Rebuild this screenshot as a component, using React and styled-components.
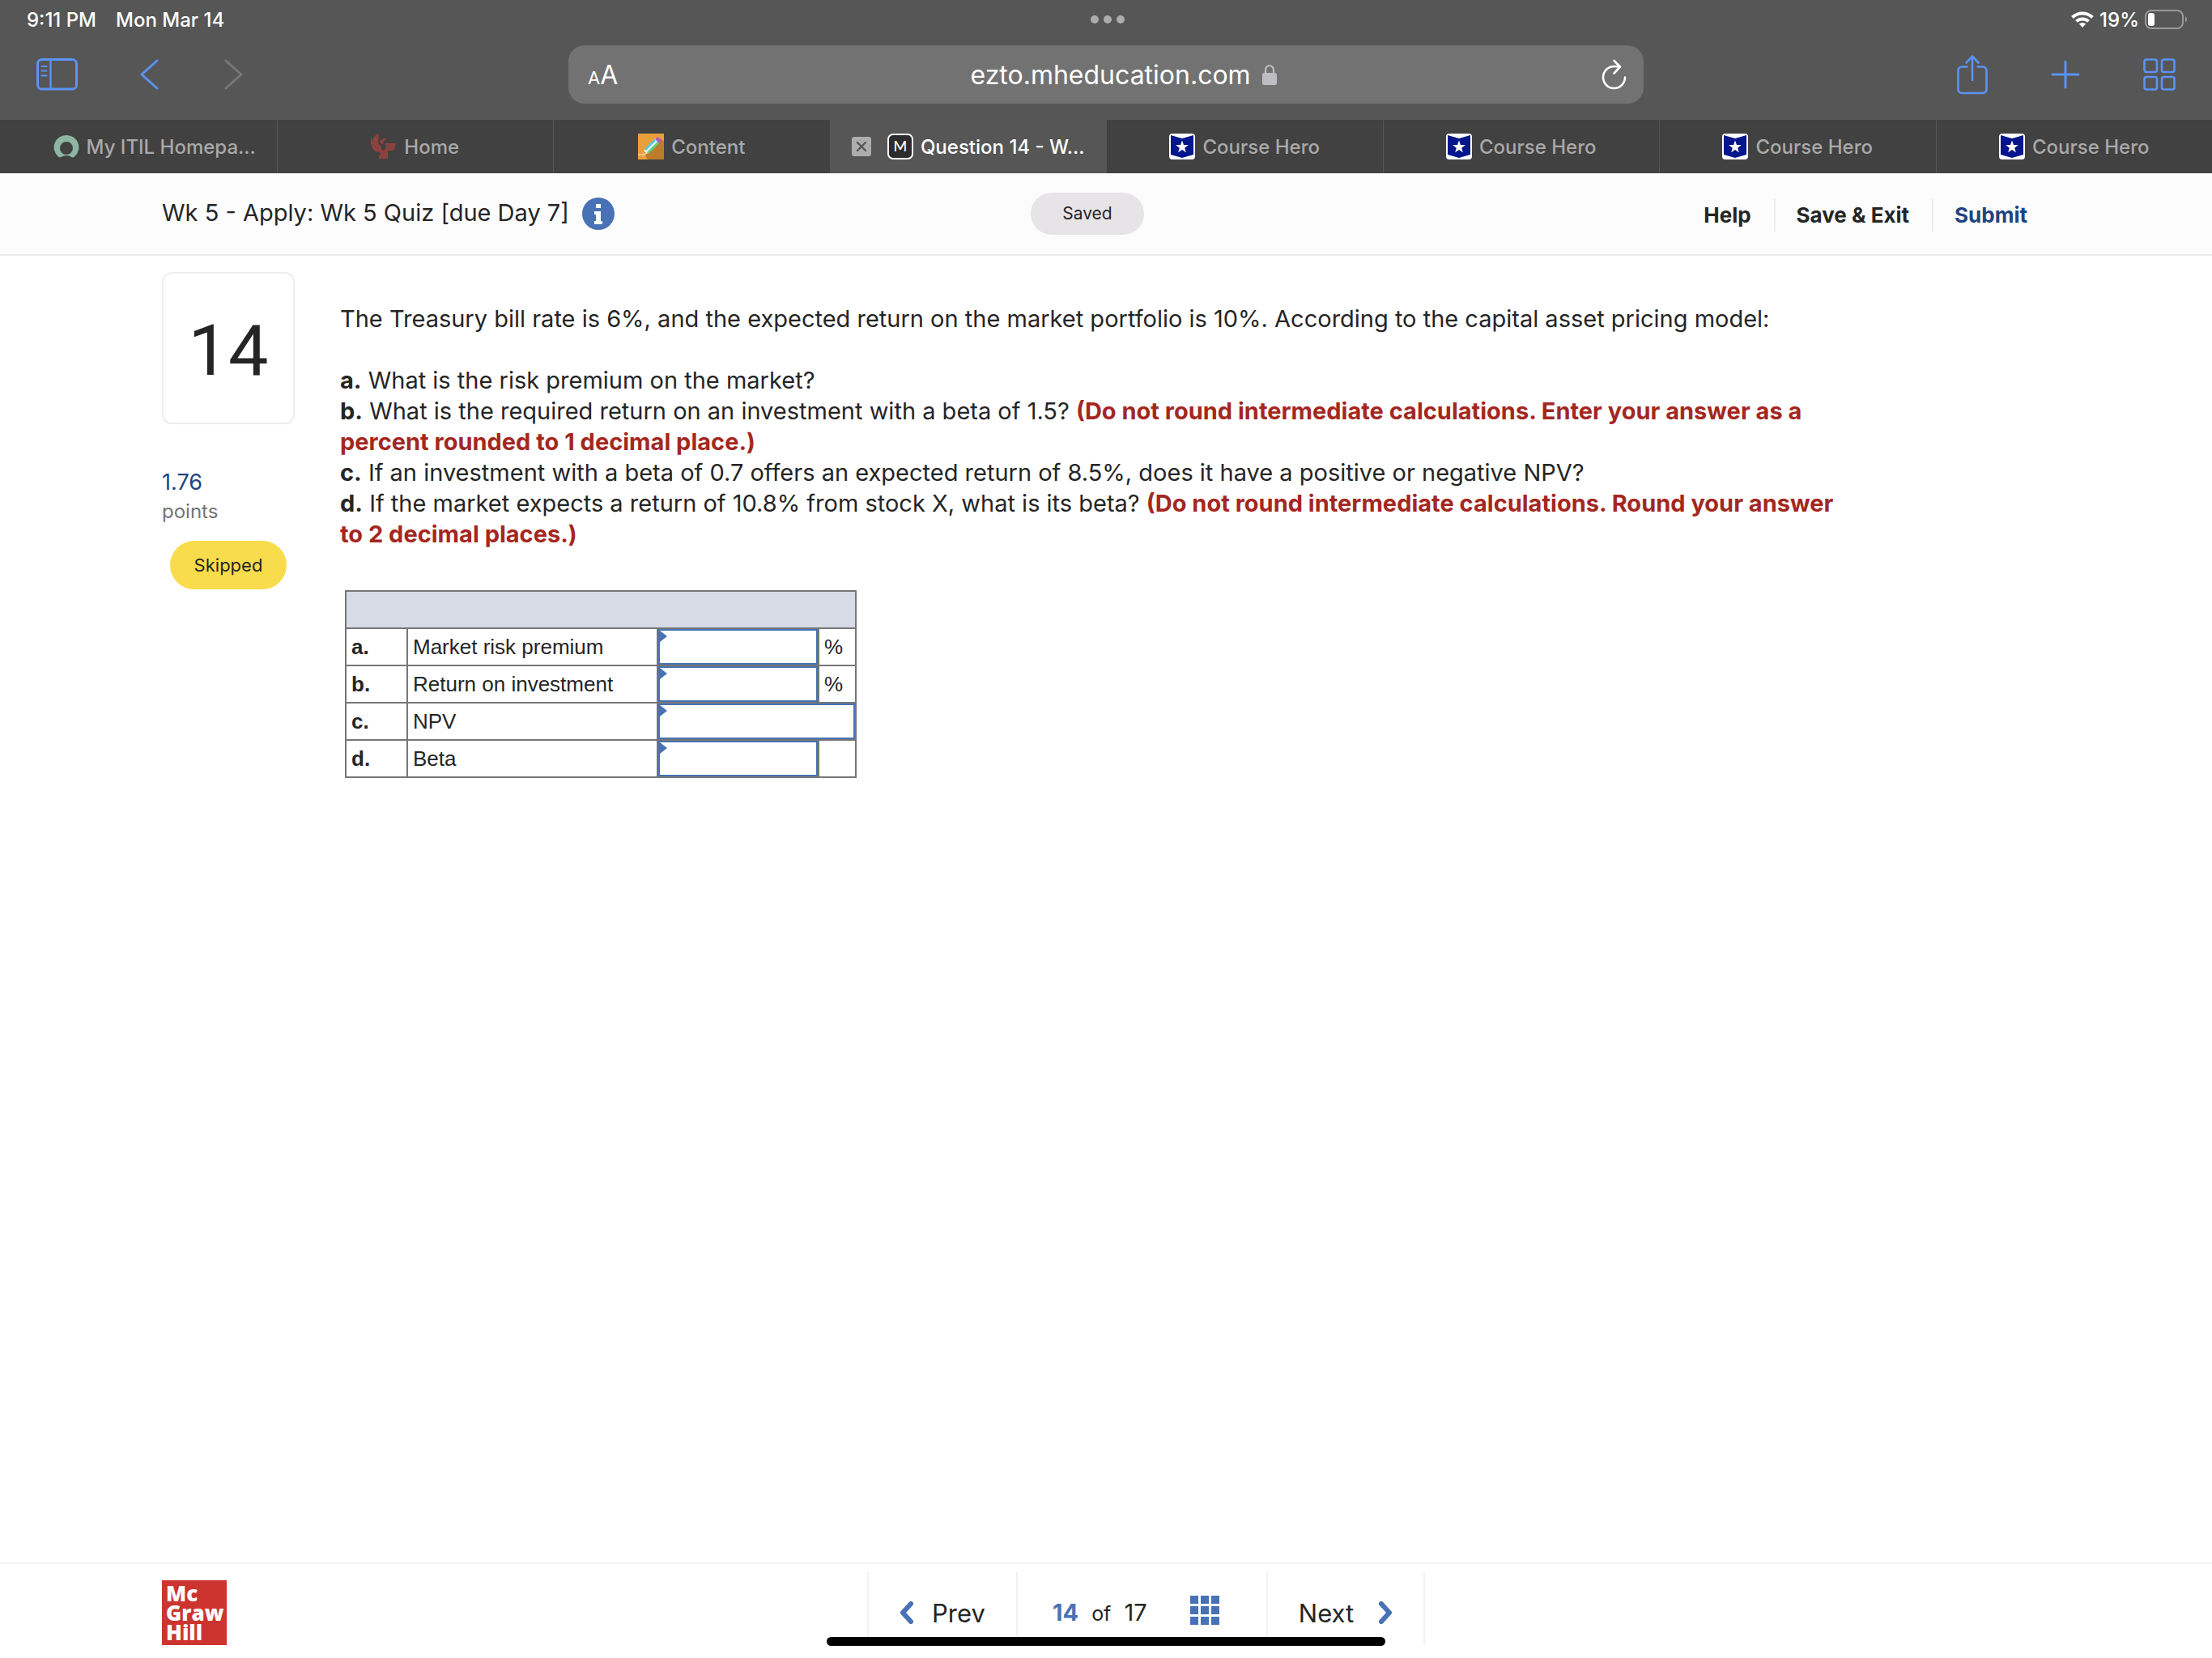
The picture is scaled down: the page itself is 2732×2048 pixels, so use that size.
import { Fragment } from 'react';
import styled, { createGlobalStyle } from 'styled-components';

const tabs = [
  { title: 'My ITIL Homepa...', icon: 'ring', long: true },
  { title: 'Home', icon: 'phoenix' },
  { title: 'Content', icon: 'pencil' },
  { title: 'Question 14 - W...', icon: 'm', active: true },
  { title: 'Course Hero', icon: 'hero' },
  { title: 'Course Hero', icon: 'hero' },
  { title: 'Course Hero', icon: 'hero' },
  { title: 'Course Hero', icon: 'hero' },
];

const answers = [
  { id: 'a', label: 'Market risk premium', unit: '%' },
  { id: 'b', label: 'Return on investment', unit: '%' },
  { id: 'c', label: 'NPV', wide: true },
  { id: 'd', label: 'Beta', unit: '' },
];

export default function App() {
  return (
    <Page>
      <GlobalStyle />
      <Browser>
        <StatusBar>
          <StatusGroup $gap={24}>
            <span>9:11 PM</span>
            <span>Mon Mar 14</span>
          </StatusGroup>
          <Dots><i /><i /><i /></Dots>
          <StatusGroup $gap={7} $end>
            <WifiIcon />
            <span>19%</span>
            <BatteryIcon />
          </StatusGroup>
        </StatusBar>
        <Toolbar>
          <ToolGroup>
            <IconButton aria-label="Sidebar"><SidebarIcon /></IconButton>
            <IconButton aria-label="Back"><Chevron points="21,2 2,19 21,36" /></IconButton>
            <IconButton aria-label="Forward" $dim><Chevron points="4,2 23,19 4,36" /></IconButton>
          </ToolGroup>
          <AddressBar>
            <TextSizeButton aria-label="Text size"><small>A</small>A</TextSizeButton>
            <AddressCenter>
              <AddressInput aria-label="Address" defaultValue="ezto.mheducation.com" />
              <LockIcon />
            </AddressCenter>
            <IconButton aria-label="Reload" $light><ReloadIcon /></IconButton>
          </AddressBar>
          <ToolGroup $end>
            <IconButton aria-label="Share"><ShareIcon /></IconButton>
            <IconButton aria-label="New tab"><PlusIcon /></IconButton>
            <IconButton aria-label="All tabs"><TabsIcon /></IconButton>
          </ToolGroup>
        </Toolbar>
        <TabBar>
          {tabs.map((tab, i) => (
            <Tab key={i} $active={tab.active} $long={tab.long}>
              {tab.active && <CloseTab aria-label="Close tab"><CloseIcon /></CloseTab>}
              <TabButton>
                <Favicon name={tab.icon} />
                {tab.title}
              </TabButton>
            </Tab>
          ))}
        </TabBar>
      </Browser>

      <Header>
        <Title>
          <h1>Wk 5 - Apply: Wk 5 Quiz [due Day 7]</h1>
          <InfoButton aria-label="Information"><InfoIcon /></InfoButton>
        </Title>
        <Saved>Saved</Saved>
        <Actions>
          <ActionButton>Help</ActionButton>
          <ActionButton>Save &amp; Exit</ActionButton>
          <ActionButton $primary>Submit</ActionButton>
        </Actions>
      </Header>

      <Main>
        <Aside>
          <NumberCard>14</NumberCard>
          <Points>1.76</Points>
          <PointsLabel>points</PointsLabel>
          <Skipped>Skipped</Skipped>
        </Aside>
        <Question>
          <p>
            The Treasury bill rate is 6%, and the expected return on the market portfolio is 10%. According to the
            capital asset pricing model:
          </p>
          <p>
            <b>a.</b> What is the risk premium on the market?
            <br />
            <b>b.</b> What is the required return on an investment with a beta of 1.5?{' '}
            <Note>(Do not round intermediate calculations. Enter your answer as a percent rounded to 1 decimal place.)</Note>
            <br />
            <b>c.</b> If an investment with a beta of 0.7 offers an expected return of 8.5%, does it have a positive or
            negative NPV?
            <br />
            <b>d.</b> If the market expects a return of 10.8% from stock X, what is its beta?{' '}
            <Note>(Do not round intermediate calculations. Round your answer to 2 decimal places.)</Note>
          </p>
          <AnswerTable>
            <colgroup>
              <col width="76" />
              <col width="309" />
              <col width="199" />
              <col width="46" />
            </colgroup>
            <thead>
              <tr><td colSpan={4} /></tr>
            </thead>
            <tbody>
              {answers.map(row => (
                <tr key={row.id}>
                  <th scope="row">{row.id}.</th>
                  <td><label htmlFor={`answer-${row.id}`}>{row.label}</label></td>
                  <AnswerCell colSpan={row.wide ? 2 : 1}>
                    <AnswerInput id={`answer-${row.id}`} type="text" />
                  </AnswerCell>
                  {!row.wide && <td>{row.unit}</td>}
                </tr>
              ))}
            </tbody>
          </AnswerTable>
        </Question>
      </Main>

      <Footer>
        <Logo><span>Mc</span><span>Graw</span><span>Hill</span></Logo>
        <Pager>
          <PagerButton $width={182}>
            <PagerChevron points="14,3 4,14 14,25" />
            Prev
          </PagerButton>
          <PagerStatus>
            <PagerCount><b>14</b> <small>of</small> 17</PagerCount>
            <GridButton aria-label="Question list"><GridIcon /></GridButton>
          </PagerStatus>
          <PagerButton $width={192} $next>
            Next
            <PagerChevron points="4,3 14,14 4,25" />
          </PagerButton>
        </Pager>
      </Footer>
      <HomeIndicator />
    </Page>
  );
}

function WifiIcon() {
  return (
    <svg width="28" height="20" viewBox="0 0 28 20" fill="none" stroke="#fff" strokeWidth="4">
      <path d="M1.5 7.5a18 18 0 0 1 25 0" />
      <path d="M6.5 12.4a11 11 0 0 1 15 0" />
      <path d="M14 20l-4.2-4.4a6 6 0 0 1 8.4 0z" fill="#fff" stroke="none" />
    </svg>
  );
}

function BatteryIcon() {
  return (
    <svg width="54" height="24" viewBox="0 0 54 24">
      <rect x="1" y="1" width="46" height="22" rx="7" fill="none" stroke="#9a9a9a" strokeWidth="2" />
      <rect x="4" y="4" width="8" height="16" rx="3" fill="#fff" />
      <path d="M50 8a5 5 0 0 1 0 8z" fill="#9a9a9a" />
    </svg>
  );
}

function SidebarIcon() {
  return (
    <svg width="52" height="40" viewBox="0 0 52 40" fill="none" stroke="currentColor" strokeLinecap="round">
      <rect x="1.5" y="1.5" width="48" height="36.5" rx="5" strokeWidth="3" />
      <path d="M17.5 2v36" strokeWidth="2.4" />
      <path d="M6.5 10h6M6.5 15.500h6M6.500 21.500h6" strokeWidth="2" />
    </svg>
  );
}

function Chevron({ points }) {
  return (
    <svg width="26" height="38" viewBox="0 0 26 38" fill="none" stroke="currentColor" strokeWidth="3" strokeLinecap="round" strokeLinejoin="round">
      <polyline points={points} />
    </svg>
  );
}

function LockIcon() {
  return (
    <svg width="18" height="26" viewBox="0 0 18 26">
      <path d="M4 12V7.5a5 5.5 0 0 1 10 0V12" fill="none" stroke="#bebdc2" strokeWidth="2.2" />
      <rect x="0" y="11" width="18" height="15" rx="2.5" fill="#bebdc2" />
    </svg>
  );
}

function ReloadIcon() {
  return (
    <svg width="32" height="38" viewBox="0 0 32 38" fill="none" stroke="currentColor" strokeWidth="2.6" strokeLinecap="round" strokeLinejoin="round">
      <path d="M29 22.5A13.5 13.5 0 1 1 15.500 9q4 0 7 .5" />
      <path d="M15.5 2l7.5 7.5-7.5 8" />
    </svg>
  );
}

function ShareIcon() {
  return (
    <svg width="38" height="50" viewBox="0 0 38 50" fill="none" stroke="currentColor" strokeWidth="2.6" strokeLinecap="round" strokeLinejoin="round">
      <path d="M12.5 15.5H6a4.5 4.5 0 0 0-4.5 4.5v23.5A4.5 4.5 0 0 0 6 48h26a4.5 4.5 0 0 0 4.5-4.5V20a4.5 4.5 0 0 0-4.5-4.5h-6.5" />
      <path d="M19 32V3M11.5 10.5L19 2.5l7.500 8" />
    </svg>
  );
}

function PlusIcon() {
  return (
    <svg width="36" height="36" viewBox="0 0 36 36" fill="none" stroke="currentColor" strokeWidth="3" strokeLinecap="round">
      <path d="M18 2v32M2 18h32" />
    </svg>
  );
}

function TabsIcon() {
  return (
    <svg width="40" height="40" viewBox="0 0 40 40" fill="none" stroke="currentColor" strokeWidth="2.6">
      <rect x="1.5" y="1.5" width="15.5" height="15.5" rx="2.5" />
      <rect x="23" y="1.5" width="15.5" height="15.5" rx="2.5" />
      <rect x="1.5" y="23" width="15.5" height="15.5" rx="2.5" />
      <rect x="23" y="23" width="15.5" height="15.5" rx="2.5" />
    </svg>
  );
}

function CloseIcon() {
  return (
    <svg width="24" height="24" viewBox="0 0 24 24">
      <rect width="24" height="24" rx="3" fill="#adadad" />
      <path d="M7 7l10 10M17 7L7 17" stroke="#565656" strokeWidth="2.4" strokeLinecap="round" />
    </svg>
  );
}

function Favicon({ name }) {
  return (
    <svg width="32" height="32" viewBox="0 0 32 32" aria-hidden="true">
      {name === 'ring' && (
        <path
          fill="#8fb5a3"
          fillRule="evenodd"
          d="M16 2a15 15 0 0 1 10 26.5q-1.500 1.500-3.500.6-6.500-4-13 0-2 .9-3.500-.6A15 15 0 0 1 16 2zm0 8a8 8 0 1 0 0 16 8 8 0 0 0 0-16z"
        />
      )}
      {name === 'phoenix' && (
        <g fill="#94403c">
          <path d="M8 0l1.500 1v6l-1 4 4 5 1 5-2 2-6-1-4-5L0 12V5l2 3 3-5z" />
          <path d="M11 9l5-3h4l-2 2-2 1-1 4-3-1z" />
          <path d="M18 12h13l-1 4-1 4-3 1h-5l-3 3-2-3 3-3z" />
          <path d="M11 23l3-3 4 2 3-1v10H10v-3l2-2z" />
          <path d="M19 15h11M20 18h9M1 8l8 6M1 13l9 6M6 4l3 3M13 23l7 5M12 28l6-5" stroke="#6e4542" strokeWidth="1" />
        </g>
      )}
      {name === 'pencil' && (
        <>
          <rect width="32" height="32" fill="#e9a03b" />
          <path d="M28 6l4 4v22H12l-3-5z" fill="#bd7b2c" />
          <path d="M0 26h9" stroke="#f3d9a5" strokeWidth="1.5" />
          <path d="M6 26l2-6L22 6l5 4-14 14z" fill="#f4f4ee" />
          <path d="M9 20L21 8" stroke="#55c8ea" strokeWidth="2.8" />
          <path d="M12 24L25 11" stroke="#5fce80" strokeWidth="2.8" />
          <path d="M21 7l3-3 5 4-3 4z" fill="#a85cc5" />
          <path d="M6 26l1.5-4.5L10 24z" fill="#f09a37" />
        </>
      )}
      {name === 'm' && (
        <>
          <rect x="1" y="1" width="30" height="30" rx="6" fill="#2c2c2c" stroke="#fff" strokeWidth="2" />
          <text x="16" y="22" textAnchor="middle" fill="#fff" fontFamily="Lato, sans-serif" fontSize="18">M</text>
        </>
      )}
      {name === 'hero' && (
        <>
          <rect width="32" height="32" rx="4" fill="#fff" />
          <path d="M2 2l14 4 14-4v24l-14 4-14-4z" fill="#05168c" />
          <path d="M16 8.5l2 5.4 5.8.2-4.6 3.6 1.600 5.6-4.800-3.200-4.800 3.200 1.600-5.600-4.600-3.600 5.800-.2z" fill="#fff" />
        </>
      )}
    </svg>
  );
}

function InfoIcon() {
  return (
    <svg width="40" height="40" viewBox="0 0 40 40">
      <circle cx="20" cy="20" r="20" fill="#4872b5" />
      <path d="M17 8h6v5h-6zM15 17h8v12h2v4H15v-4h2v-8h-2z" fill="#fff" />
    </svg>
  );
}

function PagerChevron({ points }) {
  return (
    <svg width="18" height="28" viewBox="0 0 18 28" fill="none" stroke="#4872b5" strokeWidth="6" strokeLinecap="round" strokeLinejoin="round">
      <polyline points={points} />
    </svg>
  );
}

function GridIcon() {
  return (
    <svg width="36" height="36" viewBox="0 0 36 36" fill="#4872b5">
      {[0, 13, 26].map(y => (
        <Fragment key={y}>
          {[0, 13, 26].map(x => <rect key={x} x={x} y={y} width="10" height="10" />)}
        </Fragment>
      ))}
    </svg>
  );
}

const GlobalStyle = createGlobalStyle`
  * {
    box-sizing: border-box;
  }
  body {
    margin: 0;
    background: #fff;
    color: #252525;
    font-family: Inter, "Liberation Sans", sans-serif;
  }
  h1, p {
    margin: 0;
    font-weight: normal;
  }
  button {
    padding: 0;
    border: none;
    background: none;
    color: inherit;
    font: inherit;
    cursor: pointer;
  }
  svg {
    display: block;
    flex: none;
  }
`;

const Page = styled.div`
  display: flex;
  flex-direction: column;
  min-height: 100vh;
`;

const Browser = styled.div`
  background: #565656;
  color: #fff;
`;

const StatusBar = styled.div`
  display: grid;
  grid-template-columns: 1fr auto 1fr;
  align-items: center;
  height: 48px;
  padding: 0 29px 0 33px;
  font-size: 24px;
  font-weight: 500;
`;

const StatusGroup = styled.div`
  display: flex;
  align-items: center;
  justify-content: ${props => (props.$end ? 'flex-end' : 'flex-start')};
  gap: ${props => props.$gap}px;
`;

const Dots = styled.div`
  display: flex;
  gap: 6px;
  i {
    width: 10px;
    height: 10px;
    border-radius: 50%;
    background: #adadad;
  }
`;

const Toolbar = styled.div`
  display: grid;
  grid-template-columns: 1fr minmax(0, 1328px) 1fr;
  align-items: center;
  padding: 8px 45px 20px;
`;

const ToolGroup = styled.div`
  display: flex;
  align-items: center;
  justify-content: ${props => (props.$end ? 'flex-end' : 'flex-start')};
  gap: ${props => (props.$end ? 78 : 76)}px;
`;

const IconButton = styled.button`
  color: ${props => (props.$light ? '#fff' : props.$dim ? '#777' : '#5b93f5')};
`;

const AddressBar = styled.div`
  display: flex;
  align-items: center;
  justify-content: space-between;
  height: 72px;
  padding: 0 20px 0 24px;
  border-radius: 20px;
  background: #727272;
`;

const TextSizeButton = styled.button`
  font-size: 32px;
  small {
    font-size: 22px;
  }
`;

const AddressCenter = styled.div`
  display: flex;
  align-items: center;
  gap: 14px;
  margin-left: 20px;
`;

const AddressInput = styled.input`
  width: 360px;
  padding: 0;
  border: none;
  outline: none;
  background: none;
  color: #fff;
  font: 32px Inter, sans-serif;
  text-align: right;
`;

const TabBar = styled.div`
  display: flex;
  height: 66px;
`;

const Tab = styled.div`
  display: flex;
  width: 12.5%;
  align-items: center;
  justify-content: center;
  gap: 20px;
  padding-left: ${props => (props.$long ? 40 : 0)}px;
  background: ${props => (props.$active ? '#565656' : '#414141')};
  color: ${props => (props.$active ? '#fff' : '#a9a9a9')};
  & + & {
    border-left: 1px solid ${props => (props.$active ? '#565656' : '#7a7a7a')};
  }
`;

const TabButton = styled.button`
  display: flex;
  align-items: center;
  gap: 9px;
  font-size: 24px;
  font-weight: 500;
  white-space: nowrap;
`;

const CloseTab = styled.button``;

const Header = styled.header`
  display: flex;
  align-items: center;
  height: 102px;
  padding: 0 200px;
  border-bottom: 2px solid #eee;
  background: #fcfcfc;
`;

const Title = styled.div`
  display: flex;
  flex: 0 1 1073px;
  align-items: center;
  gap: 16px;
  h1 {
    padding-bottom: 4px;
    font-size: 29px;
    white-space: nowrap;
  }
`;

const InfoButton = styled.button``;

const Saved = styled.div`
  width: 140px;
  border-radius: 26px;
  background: #e6e4e7;
  font-size: 21px;
  line-height: 52px;
  text-align: center;
`;

const Actions = styled.nav`
  display: flex;
  margin-left: auto;
  padding-top: 4px;
`;

const ActionButton = styled.button`
  padding: 0 28px 0 26px;
  color: ${props => (props.$primary ? '#20447f' : 'inherit')};
  font-size: 26px;
  font-weight: 700;
  line-height: 40px;
  & + & {
    border-left: 2px solid #eee;
  }
`;

const Main = styled.main`
  display: flex;
  flex: 1;
  gap: 56px;
  padding: 20px 452px 40px 200px;
`;

const Aside = styled.aside`
  flex: none;
  width: 164px;
`;

const NumberCard = styled.div`
  padding-top: 6px;
  border: 2px solid #eee;
  border-radius: 12px;
  font-family: Roboto, sans-serif;
  font-size: 88px;
  line-height: 178px;
  text-align: center;
`;

const Points = styled.div`
  margin-top: 54px;
  color: #20447f;
  font-size: 27px;
  line-height: 36px;
`;

const PointsLabel = styled.div`
  color: #757575;
  font-size: 24px;
  line-height: 36px;
`;

const Skipped = styled.div`
  width: 144px;
  margin: 18px 0 0 10px;
  border-radius: 30px;
  background: #f8dc4b;
  font-size: 22px;
  line-height: 60px;
  text-align: center;
`;

const Question = styled.section`
  flex: 1;
  padding-top: 39px;
  font-size: 29px;
  line-height: 38px;
  p + p {
    margin-top: 38px;
  }
`;

const Note = styled.b`
  color: #a4271f;
`;

const AnswerTable = styled.table`
  margin: 50px 0 0 6px;
  border-collapse: collapse;
  table-layout: fixed;
  width: 630px;
  font: 26px/30px "Liberation Sans", Arial, sans-serif;
  th, td {
    height: 46px;
    padding: 0 6px;
    border: 2px solid #767676;
    text-align: left;
  }
  thead td {
    background: #d7dbe6;
  }
`;

const AnswerCell = styled.td`
  position: relative;
  && {
    padding: 0;
  }
  &::after {
    content: '';
    position: absolute;
    top: 2px;
    left: 2px;
    border: solid transparent;
    border-width: 7px 0 7px 9px;
    border-left-color: #4872b5;
  }
`;

const AnswerInput = styled.input`
  display: block;
  width: 100%;
  height: 44px;
  padding: 0 12px;
  border: 2px solid #4872b5;
  outline: none;
  background: #fff;
  font: inherit;
`;

const Footer = styled.footer`
  display: flex;
  align-items: flex-start;
  height: 118px;
  padding: 0 200px;
  border-top: 2px solid #f2f2f2;
`;

const Logo = styled.div`
  display: flex;
  flex-direction: column;
  width: 80px;
  height: 80px;
  margin-top: 20px;
  padding: 4px 5px;
  background: #cd3430;
  color: #fff;
  font-family: "Open Sans", sans-serif;
  font-size: 26px;
  font-weight: 800;
  line-height: 24px;
`;

const Pager = styled.nav`
  display: flex;
  margin: 10px 0 0 791px;
  height: 90px;
  border: solid #f2f2f2;
  border-width: 0 2px;
  font-size: 31px;
`;

const PagerButton = styled.button`
  display: flex;
  align-items: center;
  justify-content: center;
  gap: ${props => (props.$next ? 30 : 22)}px;
  width: ${props => props.$width}px;
  padding-top: 10px;
`;

const PagerStatus = styled.div`
  display: flex;
  align-items: center;
  gap: 53px;
  width: 311px;
  padding: 4px 0 0 43px;
  border: solid #f2f2f2;
  border-width: 0 2px;
`;

const PagerCount = styled.div`
  display: flex;
  align-items: baseline;
  gap: 16px;
  padding-top: 4px;
  font-size: 29px;
  b {
    color: #4872b5;
  }
  small {
    font-size: 25px;
  }
`;

const GridButton = styled.button``;

const HomeIndicator = styled.div`
  position: fixed;
  bottom: 15px;
  left: 50%;
  width: 690px;
  height: 11px;
  margin-left: -345px;
  border-radius: 6px;
  background: #000;
`;
